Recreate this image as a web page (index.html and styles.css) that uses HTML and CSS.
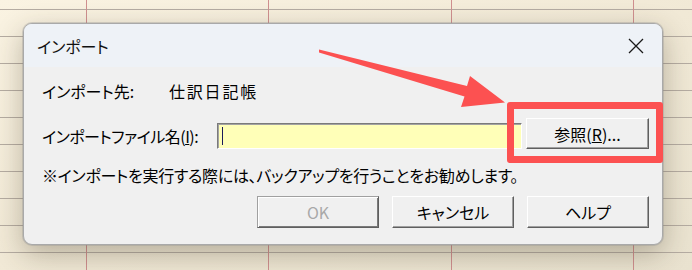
FILE: index.html
```html
<!DOCTYPE html>
<html lang="ja">
<head>
<meta charset="utf-8">
<link rel="stylesheet" href="styles.css">
</head>
<body>
<div class="sheet">
  <div class="dialog">
    <div class="titlebar">
      <span class="title">インポート</span>
      <svg class="close" width="16" height="16" viewBox="0 0 16 16"><path d="M1 1 L15 15 M15 1 L1 15" stroke="#1a1a1a" stroke-width="1.3" fill="none"/></svg>
    </div>
    <div class="body">
      <div class="row row1">
        <span class="label">インポート先:</span>
        <span class="value">仕訳日記帳</span>
      </div>
      <div class="row row2">
        <span class="label2">インポートファイル名(<u>I</u>):</span>
        <div class="input"><span class="caret"></span></div>
        <button class="btn browse">参照(<u>R</u>)...</button>
      </div>
      <div class="row note">※インポートを実行する際には、バックアップを行うことをお勧めします。</div>
      <div class="row actions">
        <button class="btn ok" disabled>OK</button>
        <button class="btn">キャンセル</button>
        <button class="btn">ヘルプ</button>
      </div>
    </div>
  </div>
  <div class="highlight"></div>
  <svg class="arrow" width="692" height="270" viewBox="0 0 692 270">
    <polygon points="319,49.5 467,86 470,76 505,102.5 461,107 464.5,96.5 319,52.5" fill="#fc5151"/>
  </svg>
</div>
</body>
</html>
```
FILE: styles.css
```css
html, body {
  margin: 0;
  padding: 0;
}
body {
  width: 692px;
  height: 270px;
  overflow: hidden;
  font-family: "Noto Sans CJK JP", "Noto Sans", sans-serif;
  font-feature-settings: "palt";
}
.sheet {
  position: relative;
  width: 692px;
  height: 270px;
  box-sizing: border-box;
  padding: 23px 0 0 23px;
  background:
    linear-gradient(90deg, transparent 86px, #cf8f8f 86px, #cf8f8f 87px, transparent 87px,
      transparent 268px, #cf8f8f 268px, #cf8f8f 269px, transparent 269px,
      transparent 451px, #cf8f8f 451px, #cf8f8f 452px, transparent 452px,
      transparent 633px, #cf8f8f 633px, #cf8f8f 634px, transparent 634px),
    repeating-linear-gradient(180deg, transparent 0, transparent 9px, #b5aca2 9px, #b5aca2 10px, transparent 10px, transparent 27px),
    linear-gradient(160deg, #faf3e2 0%, #f1e9d6 50%, #e9e2cf 100%);
}
.dialog {
  position: relative;
  width: 640px;
  height: 222px;
  box-sizing: border-box;
  border: 1px solid #a9a9a9;
  border-radius: 9px;
  background: #f0f0f0;
  box-shadow: 0 0 0 1px rgba(150,150,150,0.35), 0 9px 28px rgba(60,50,30,0.32);
  overflow: hidden;
  display: flex;
  flex-direction: column;
}
.titlebar {
  height: 43px;
  flex: none;
  background: #eef2f7;
  display: flex;
  align-items: center;
  justify-content: space-between;
  padding: 0 18px 0 13px;
}
.title {
  font-size: 16px;
  color: #111;
  line-height: 20px;
}
.close {
  display: block;
}
.body {
  flex: 1;
  padding: 10px 13px 0 18px;
  font-size: 16px;
  color: #000;
}
.row {
  display: flex;
  align-items: center;
}
.row1 {
  height: 28px;
}
.label {
  width: 127px;
}
.value {
  letter-spacing: 1.8px;
}
.row2 {
  margin-top: 13px;
  height: 31px;
  align-items: flex-end;
}
.label2 {
  width: 175px;
  align-self: center;
  margin-top: 5px;
  letter-spacing: -0.5px;
}
.input {
  width: 305px;
  height: 26px;
  box-sizing: border-box;
  background: #ffffb8;
  border: 1px solid;
  border-color: #7a7a7a #ffffff #ffffff #7a7a7a;
  box-shadow: inset 1px 1px 0 #a3a3a3;
  display: flex;
  align-items: center;
  padding-left: 4px;
}
.caret {
  width: 1px;
  height: 18px;
  background: #1b1b5a;
}
.btn {
  font-family: inherit;
  font-size: 16px;
  font-feature-settings: "palt";
  color: #000;
  background: #f0f0f0;
  box-sizing: border-box;
  width: 123px;
  height: 31px;
  padding: 0;
  border: 1px solid;
  border-color: #ffffff #5f5f5f #5f5f5f #ffffff;
  box-shadow: inset -1px -1px 0 #a0a0a0;
  line-height: 1;
}
.browse {
  margin-left: 4px;
}
.note {
  margin-top: 15px;
  height: 22px;
  letter-spacing: -0.3px;
}
.actions {
  margin-top: 10px;
  justify-content: flex-end;
  gap: 13px;
}
.actions .btn {
  width: 122px;
  height: 32px;
}
.ok {
  color: #a8a8a8;
  border-color: #a0a0a0 #5f5f5f #5f5f5f #a0a0a0;
  box-shadow: inset 1px 1px 0 #ffffff, inset -1px -1px 0 #7a7a7a;
}
.highlight {
  position: absolute;
  left: 507px;
  top: 102px;
  width: 156px;
  height: 61px;
  box-sizing: border-box;
  border: 7px solid #fc5151;
  border-radius: 3px;
}
.arrow {
  position: absolute;
  left: 0;
  top: 0;
}
```
